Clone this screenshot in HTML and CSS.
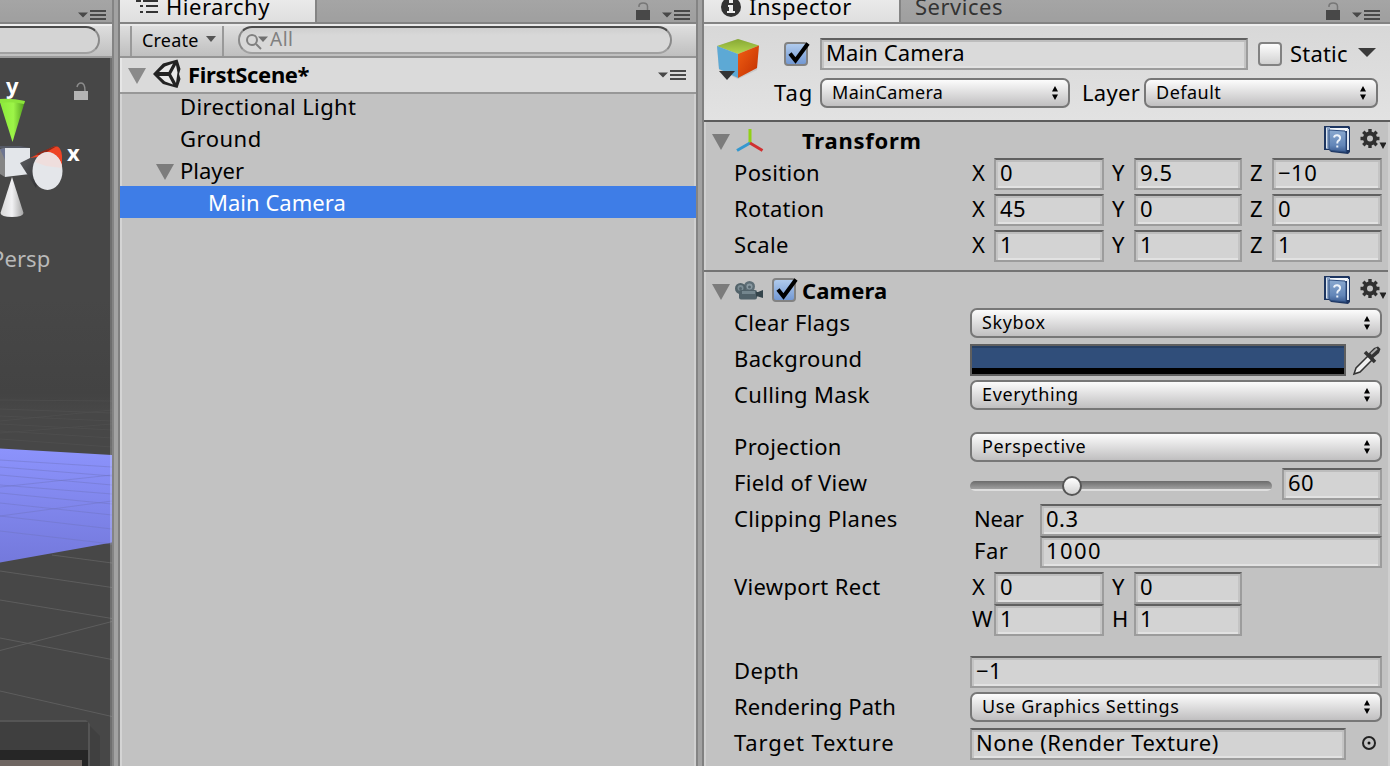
FILE: index.html
```
<!DOCTYPE html>
<html lang="en">
<head>
<meta charset="utf-8">
<title>Editor</title>
<link rel="stylesheet" href="styles.css">
</head>
<body>
<svg class="defs" width="0" height="0">
  <defs>
    <linearGradient id="gGreen" x1="0" x2="1"><stop offset="0" stop-color="#8ae83a"/><stop offset=".55" stop-color="#9df548"/><stop offset="1" stop-color="#4f9a1c"/></linearGradient>
    <linearGradient id="gWhite" x1="0" x2="1"><stop offset="0" stop-color="#d8d8d8"/><stop offset=".5" stop-color="#f2f2f4"/><stop offset="1" stop-color="#a4a4a4"/></linearGradient>
    <linearGradient id="gDark" x1="0" x2="1" y1="0" y2="1"><stop offset="0" stop-color="#5c5d61"/><stop offset=".6" stop-color="#3d3e41"/><stop offset="1" stop-color="#2e2e30"/></linearGradient>
    <linearGradient id="gPlane" x1="0" y1="0" x2="0" y2="1"><stop offset="0" stop-color="#8c93fc"/><stop offset="1" stop-color="#7479dc"/></linearGradient>
    <linearGradient id="gSky" x1="0" y1="0" x2="0" y2="1"><stop offset="0" stop-color="#474747"/><stop offset=".85" stop-color="#434343"/><stop offset="1" stop-color="#474747"/></linearGradient>
    <linearGradient id="gTop" x1="0" y1="0" x2="0" y2="1"><stop offset="0" stop-color="#87a834"/><stop offset="1" stop-color="#b5d650"/></linearGradient>
    <linearGradient id="gRed" x1="0" y1="0" x2="1" y2="1"><stop offset="0" stop-color="#f25f12"/><stop offset="1" stop-color="#c02f02"/></linearGradient>
    <linearGradient id="gCheck" x1="0" y1="0" x2="0" y2="1"><stop offset="0" stop-color="#b3cdee"/><stop offset="1" stop-color="#7096d2"/></linearGradient>
    <linearGradient id="gBox" x1="0" y1="0" x2="0" y2="1"><stop offset="0" stop-color="#fff"/><stop offset="1" stop-color="#cfcfcf"/></linearGradient>
    <linearGradient id="gBook" x1="0" y1="0" x2="0" y2="1"><stop offset="0" stop-color="#8aa9cf"/><stop offset=".7" stop-color="#6286b8"/><stop offset="1" stop-color="#3c5d92"/></linearGradient>
    <symbol id="lock" viewBox="0 0 14 18"><path d="M0 8H14V18H0Z"/><path d="M3 5V3.500Q3.500 1 7 1Q11.500 1 11.500 4.500V8" fill="none" stroke="currentColor" stroke-width="1.500"/></symbol>
    <symbol id="menu" viewBox="0 0 28 10"><path d="M0 2.500H10L5 7.500ZM12 0H28V2H12ZM12 4H28V6H12ZM12 8H28V10H12Z"/></symbol>
    <symbol id="fold" viewBox="0 0 18 16"><path d="M0 0H18L9 16Z"/></symbol>
    <symbol id="check" viewBox="0 0 26 26"><rect x="1" y="2" width="22" height="22" rx="3" fill="url(#gCheck)" stroke="#828282" stroke-width="2"/><path d="M6 12.500L11.500 19.500L24 2.500" fill="none" stroke="#000" stroke-width="4"/></symbol>
    <symbol id="help" viewBox="0 0 26 28"><path d="M0 0H25L26 1V26L24 28L7 26L5 24H0Z" fill="#1d3560"/><path d="M2 1H6V23H2Z" fill="#8ba3c6"/><path d="M2.500 2V22" stroke="#dbe5f0"/><path d="M6 2H24V5H6Z" fill="#f2f6fb"/><path d="M23 3H25V24H23Z" fill="#dfe8f3"/><path d="M5 4L21 5L22 7V26L7 24.500L5 23Z" fill="url(#gBook)" stroke="#2e4e80"/><path d="M10 11.500Q10.500 9 13.500 9.300Q16.500 10 16 12.500Q15.500 14.300 14 15Q13.300 15.500 13.300 17.500M13.300 19.500V21.500" fill="none" stroke="#eef4fb" stroke-width="2"/></symbol>
    <symbol id="gear" viewBox="0 0 26 24"><circle cx="10" cy="10.500" r="5" fill="none" stroke="#303030" stroke-width="4"/><path d="M10 1V5M10 16V20M.5 10.500H4M16 10.500H19.500M3.300 3.800L6 6.500M14 14.500L16.700 17.200M16.700 3.800L14 6.500M6 14.500L3.300 17.200" stroke="#303030" stroke-width="3.400"/><path d="M19.500 14.500H26.500L23 21Z" fill="#222"/></symbol>
    <symbol id="updown" viewBox="0 0 6 14"><path d="M3 0L6 5.500H0ZM0 8.500H6L3 14Z"/></symbol>
  </defs>
</svg>
<div class="editor">
  <section class="scene">
    <div class="tabs"><svg class="menu-icon"><use href="#menu"/></svg></div>
    <div class="scene-bar"><div class="scene-search"></div></div>
    <svg class="viewport" width="112" height="708" viewBox="0 58 112 708">
      <rect y="58" width="112" height="708" fill="#474747"/>
      <rect y="300" width="112" height="110" fill="url(#gSky)"/>
      <g stroke="#505050" fill="none" opacity=".7"><path d="M0 400L112 401M0 409L112 413M0 416L112 421M0 424L112 430M0 431L112 438M0 439L112 447M0 421L112 410M0 433L112 424"/></g>
      <path d="M0 448.500L112 455V542.500L0 562.500Z" fill="url(#gPlane)"/>
      <g stroke="#6f74bf" fill="none" opacity=".45"><path d="M0 460L112 467M0 467L112 476M0 475L112 485M0 485L112 494M0 493L112 504M0 503L112 515M0 516L112 529M0 531L112 544M0 487L112 475M0 516L112 501"/></g>
      <g stroke="#5d5d5d" fill="none"><path d="M52 555L112 563M0 571L112 587.500M0 600L112 618.500M0 638L112 659.500M0 691L112 716.500M0 650.500L112 621.500"/></g>
      <path d="M90 726L100 736V766H90Z" fill="#333" opacity=".35"/><path d="M0 720H86L90 724V766H0Z" fill="#555"/>
      <path d="M0 722H88V766H0Z" fill="#3f3f3f"/><rect y="750" width="88" height="16" fill="#262626"/><rect y="760" width="82" height="6" fill="#6f6662"/>
      <text x="6" y="94" class="axis">y</text>
      <text x="67" y="161" class="axis">x</text>
      <text x="-9" y="267" class="persp">Persp</text>
      <path d="M-1 99L25 101L12.500 142Z" fill="url(#gGreen)"/>
      <path d="M-1 99Q12 98 25 101L24 104Q12 101 0 103Z" fill="#8de53c"/>
      <path d="M0 149L5 148V177L0 174Z" fill="#858585"/><path d="M0 149L5 148V160Z" fill="#6d7590"/><path d="M0 146H20L30 148H0Z" fill="#565a66"/>
      <path d="M5 148H30V174L5 177Z" fill="#e3e6ea"/>
      <path d="M30 158L54 146.500Q61 145 62 156V166L45 168L30 160Z" fill="#ee4425"/><path d="M36 154L54 146.500L57 146L40 156Z" fill="#8f2818"/>
      <path d="M20 163L30 158L44 156L36 188Z" fill="url(#gDark)"/>
      <ellipse cx="47.500" cy="171" rx="15" ry="19" fill="#e4e6ea"/><path d="M39 156Q47 149 56 156Q62 161 62 168L46 166L35 162Z" fill="#efdedd"/>
      <path d="M12 177L23.500 213Q23 217 12 217Q1 217 .5 213Z" fill="url(#gWhite)"/>
      <g fill="#b4b4b4"><rect x="74" y="91" width="14" height="9"/><path d="M77 87Q78 83 81 83Q85 83 85 91" fill="none" stroke="#8c8c8c" stroke-width="1.500"/></g>
      <rect x="110" y="58" width="2" height="708" fill="#fff" opacity=".22"/>
    </svg>
  </section>
  <div class="splitter"></div>
  <section class="hierarchy">
    <div class="tabs">
      <div class="tab tab-hier"><svg width="24" height="16" viewBox="0 0 24 16" fill="#333"><path d="M1 0H6V2H1ZM8 0H23V2H8ZM5 5H8V7H5ZM11 5H23V7H11ZM5 11H8V13H5ZM11 11H23V13H11Z"/></svg><span class="t-hier">Hierarchy</span></div>
      <svg class="lock-icon"><use href="#lock"/></svg><svg class="menu-icon hier-menu"><use href="#menu"/></svg>
    </div>
    <div class="toolbar">
      <div class="create"><span>Create</span><svg width="10" height="6" viewBox="0 0 10 6" fill="#555"><path d="M0 0H10L5 6Z"/></svg></div>
      <div class="search"><svg width="24" height="18" viewBox="0 0 24 18" fill="none" stroke="#808080" stroke-width="2"><circle cx="6" cy="7" r="5"/><path d="M10 11L15 16"/><path d="M12 3.500H22L17 9Z" fill="#707070" stroke="none"/></svg><span>All</span></div>
    </div>
    <div class="scene-head">
      <svg class="fold" fill="#8a8a8a"><use href="#fold"/></svg>
      <svg class="unity" width="28" height="30" viewBox="0 0 28 30"><path d="M0 15L10 4.500L24.500 .5L27.500 10L26 15L27.500 20L24.500 29L10 25Z" fill="#222"/><path d="M6 13L12 7.500L20 4.500L15.500 13ZM6 17H15.500L20 25.500L12 22.500ZM23 6L24.500 13.500L23 24L18 15Z" fill="#e8e8e8"/></svg>
      <b>FirstScene*</b>
      <svg class="menu-icon head-menu"><use href="#menu"/></svg>
    </div>
    <div class="tree">
      <div class="item d1"><span>Directional Light</span></div>
      <div class="item d1 open"><span>Ground</span></div>
      <div class="item parent"><svg class="fold" fill="#7c7c7c"><use href="#fold"/></svg><span>Player</span></div>
      <div class="item d2 selected"><span>Main Camera</span></div>
    </div>
  </section>
  <div class="splitter"></div>
  <section class="inspector">
    <div class="tabs">
      <div class="tab tab-insp"><svg width="20" height="18" viewBox="0 0 20 18"><circle cx="10" cy="7" r="10" fill="#333"/><path d="M8 0H12V3H8ZM7 5H12V11H14V13H6V11H8V7H7Z" fill="#eee"/></svg><span class="t-insp">Inspector</span></div>
      <div class="tab-off">Services</div>
      <svg class="lock-icon"><use href="#lock"/></svg><svg class="menu-icon insp-menu"><use href="#menu"/></svg>
    </div>
    <div class="object">
      <svg class="cube" width="46" height="46" viewBox="0 0 46 46"><path d="M3 8L24 1L45 8L43 32L24 41L5 32Z" fill="#b5b5b5" opacity=".5"/><path d="M3 8L24 1L45 7.500L24 16Z" fill="url(#gTop)"/><path d="M3 8L24 16V40L5 31Z" fill="#5da9d5"/><path d="M45 7.500L24 16V40L43 30Z" fill="url(#gRed)"/><path d="M5 33H21L13 42Z" fill="#333"/></svg>
      <div class="object-main">
        <div class="name-row">
          <svg class="check"><use href="#check"/></svg>
          <div class="field name tight">Main Camera</div>
          <svg class="box" width="24" height="24" viewBox="0 0 24 24"><rect x="1" y="1" width="22" height="22" rx="3" fill="url(#gBox)" stroke="#828282" stroke-width="2"/></svg>
          <span class="static">Static</span>
          <svg width="18" height="9" viewBox="0 0 18 9" fill="#3b3b3b"><path d="M0 0H18L9 9Z"/></svg>
        </div>
        <div class="tag-row">
          <span class="tag">Tag</span><div class="popup p-tag"><span>MainCamera</span><svg class="ud"><use href="#updown"/></svg></div>
          <span class="layer">Layer</span><div class="popup p-layer"><span>Default</span><svg class="ud"><use href="#updown"/></svg></div>
        </div>
      </div>
    </div>
    <div class="component">
      <div class="title">
        <svg class="fold" fill="#7c7c7c"><use href="#fold"/></svg>
        <svg class="ico-tr" width="28" height="24" viewBox="0 0 28 24" fill="none" stroke-width="3"><path d="M14 1V15" stroke="#91d016"/><path d="M14 15L1 22.500" stroke="#3498cf"/><path d="M14 15L26.500 22.500" stroke="#d13030"/></svg>
        <b class="wide">Transform</b><svg class="help"><use href="#help"/></svg><svg class="gear"><use href="#gear"/></svg>
      </div>
      <div class="rows">
        <div class="row"><label>Position</label><div class="vec"><i>X</i><div class="field">0</div><i>Y</i><div class="field">9.5</div><i>Z</i><div class="field">−10</div></div></div>
        <div class="row"><label>Rotation</label><div class="vec"><i>X</i><div class="field">45</div><i>Y</i><div class="field">0</div><i>Z</i><div class="field">0</div></div></div>
        <div class="row"><label>Scale</label><div class="vec"><i>X</i><div class="field">1</div><i>Y</i><div class="field">1</div><i>Z</i><div class="field">1</div></div></div>
      </div>
    </div>
    <div class="component last">
      <div class="title">
        <svg class="fold" fill="#7c7c7c"><use href="#fold"/></svg>
        <svg class="ico-cam" width="28" height="20" viewBox="0 0 28 20"><circle cx="14.500" cy="5.500" r="5.500" fill="#5e6e76"/><circle cx="5.500" cy="7.500" r="5.500" fill="#53636a"/><circle cx="14.500" cy="5.500" r="3" fill="#8a9aa2"/><circle cx="5.500" cy="7" r="3" fill="#7c8d95"/><circle cx="14.500" cy="6" r="1.500" fill="#56666e"/><circle cx="5.500" cy="7.500" r="1.500" fill="#56666e"/><rect x="4" y="9" width="18" height="9.500" rx="2" fill="#51626a"/><rect x="7" y="10" width="13" height="3" fill="#74868e"/><path d="M21 11H23L28 9V17L23 15.500H21Z" fill="#34444b"/></svg>
        <svg class="check cam-check"><use href="#check"/></svg>
        <b class="narrow">Camera</b><svg class="help"><use href="#help"/></svg><svg class="gear"><use href="#gear"/></svg>
      </div>
      <div class="rows">
        <div class="row"><label>Clear Flags</label><div class="popup"><span>Skybox</span><svg class="ud"><use href="#updown"/></svg></div></div>
        <div class="row"><label>Background</label><div class="color"></div><svg class="dropper" width="30" height="32" viewBox="0 0 30 32"><path d="M2 30L4 24L17 11L21 15L8 28Z" fill="#eee" stroke="#333" stroke-width="1.500"/><path d="M13 8L23 18" stroke="#333" stroke-width="3.500"/><path d="M16 10L22 4L26 2.500L28.500 5L27 9L20 15Z" fill="#333"/><path d="M19 10L25 4.500" stroke="#aaa" stroke-width="2"/></svg></div>
        <div class="row"><label>Culling Mask</label><div class="popup"><span>Everything</span><svg class="ud"><use href="#updown"/></svg></div></div>
        <div class="row gap-16"><label>Projection</label><div class="popup"><span>Perspective</span><svg class="ud"><use href="#updown"/></svg></div></div>
        <div class="row"><label>Field of View</label><div class="slider"><div class="knob"></div></div><div class="field fov">60</div></div>
        <div class="row tall"><label>Clipping Planes</label><div class="planes"><i class="tight">Near</i><div class="field">0.3</div><i>Far</i><div class="field loose">1000</div></div></div>
        <div class="row tall"><label>Viewport Rect</label><div class="vec two"><i>X</i><div class="field">0</div><i>Y</i><div class="field">0</div><i>W</i><div class="field">1</div><i>H</i><div class="field">1</div></div></div>
        <div class="row gap-16"><label>Depth</label><div class="field full">−1</div></div>
        <div class="row"><label class="tight">Rendering Path</label><div class="popup"><span>Use Graphics Settings</span><svg class="ud"><use href="#updown"/></svg></div></div>
        <div class="row"><label class="airy">Target Texture</label><div class="field texture">None (Render Texture)</div><svg class="picker" width="16" height="16" viewBox="0 0 16 16"><circle cx="8" cy="8" r="6" fill="none" stroke="#222" stroke-width="2"/><circle cx="8" cy="8" r="1.500" fill="#111"/></svg></div>
      </div>
    </div>
  </section>
</div>
</body>
</html>
```
FILE: styles.css
```
* { box-sizing: border-box; }
body { margin: 0; background: #c2c2c2; color: #000; font: 22px/30px "Noto Sans", sans-serif; letter-spacing: .5px; overflow: hidden; }
svg { display: block; flex: none; }
i { font-style: normal; }
b { font-weight: 700; letter-spacing: .3px; }
.defs { position: absolute; }
.editor { display: flex; width: 1390px; height: 766px; overflow: hidden; white-space: nowrap; }
.tabs { display: flex; height: 24px; background: linear-gradient(#a5a5a5, #9f9f9f); border-bottom: 2px solid #838383; overflow: hidden; }
.menu-icon { width: 28px; height: 10px; fill: #484848; }
.lock-icon { width: 14px; height: 18px; margin: 2px 0 0 auto; fill: #484848; color: #777; }
.splitter { width: 8px; flex: none; background: #a2a2a2; border-left: 2px solid #848484; border-right: 2px solid #808080; }

.scene { width: 112px; flex: none; overflow: hidden; }
.scene .menu-icon { margin: 10px 0 0 78px; }
.scene-bar { height: 34px; background: linear-gradient(#dedede, #c0c0c0); border-top: 2px solid #eee; border-bottom: 2px solid #9a9a9a; }
.scene-search { width: 120px; height: 28px; margin-left: -20px; border: 2px solid #8a8a8a; border-top-color: #4b4b4b; border-bottom-color: #a0a0a0; border-radius: 14px; background: #d4d4d4; }
.axis { font: 700 22px "Noto Sans", sans-serif; fill: #fff; }
.persp { fill: #b9b9b9; letter-spacing: .1px; }

.hierarchy { width: 576px; flex: none; border-right: 2px solid #d0d0d0; box-shadow: inset 2px 0 #d4d4d4; }
.hierarchy .tabs, .hierarchy .toolbar, .hierarchy .scene-head, .hierarchy .selected { margin-right: -2px; }
.tab { display: flex; height: 22px; background: linear-gradient(#eaeaea, #dfdfdf); border-right: 2px solid #848484; }
.tab span { margin-top: -9px; }
.tab-hier { width: 197px; padding-left: 15px; }
.t-hier { margin-left: 7px; }
.hier-menu { margin: 10px 6px 0 12px; }
.toolbar { display: flex; height: 34px; background: linear-gradient(#dedede, #bfbfbf); border-top: 2px solid #e9e9e9; border-bottom: 2px solid #949494; }
.create { display: flex; width: 94px; margin-left: 10px; padding: 0 6px 0 10px; border-left: 2px solid #999; border-right: 2px solid #999; font-size: 18px; line-height: 29px; letter-spacing: .2px; }
.create svg { margin: 10px 0 0 auto; }
.search { display: flex; width: 434px; height: 28px; margin-left: 14px; padding: 5px 0 0 6px; border: 2px solid #8a8a8a; border-top-color: #4b4b4b; border-bottom-color: #a0a0a0; border-radius: 14px; background: linear-gradient(#cfcfcf, #d8d8d8 30%); color: #808080; font-size: 19px; line-height: 26px; }
.search span { margin-top: -7px; }
.scene-head { display: flex; height: 36px; padding: 2px 8px 0 8px; background: #dadada; border-bottom: 2px solid #979797; box-shadow: inset 2px 0 #e6e6e6; }
.fold { width: 18px; height: 16px; }
.scene-head .fold { margin-top: 8px; }
.unity { margin: -1px 0 0 7px; }
.scene-head b { margin-left: 7px; line-height: 28px; letter-spacing: -.35px; }
.head-menu { margin: 10px 2px 0 auto; }
.tree { margin-top: -4px; letter-spacing: .38px; }
.item { display: flex; height: 32px; line-height: 32px; }
.item.d1 { padding-left: 60px; }
.item.open { letter-spacing: .5px; }
.item.d2 { padding-left: 88px; letter-spacing: .03px; }
.parent { padding-left: 36px; letter-spacing: 0; }
.parent .fold { margin: 10px 6px 0 0; }
.selected { background: #3e7de7; color: #fff; }

.inspector { width: 686px; flex: none; border-right: 2px solid #cfcfcf; box-shadow: inset 2px 0 #d0d0d0; }
.inspector .tabs, .object { margin-right: -2px; }
.tab-insp { width: 197px; padding-left: 17px; }
.t-insp { margin-left: 8px; }
.tab-off { margin: -9px 0 0 14px; color: #333; }
.insp-menu { margin: 10px 10px 0 12px; }
.object { display: flex; height: 98px; padding: 12px 0 0 10px; background: linear-gradient(#d8d8d8, #e2e2e2); border-top: 2px solid #eee; border-bottom: 2px solid #5c5c5c; }
.object-main { width: 618px; margin-left: 14px; }
.name-row, .tag-row { display: flex; height: 32px; }
.name-row { align-items: center; }
.check { width: 26px; height: 26px; }
.name-row .check { margin: 0 0 0 10px; }
.field { height: 32px; padding: 0 0 0 4px; line-height: 25px; background: #d3d3d3; border: 2px solid #9c9c9c; border-top-color: #606060; box-shadow: inset 0 2px #bdbdbd, inset 2px 0 #c4c4c4, inset -2px 0 #c4c4c4, inset 0 -2px #e2e2e2; }
.field.name { width: 428px; margin-left: 10px; background: #dadada; }
.tight { letter-spacing: .1px; }
.loose { letter-spacing: 1.4px; }
.airy { letter-spacing: .88px; }
.box { margin-left: 10px; }
.static { margin: -2px 0 0 8px; width: 67px; letter-spacing: .2px; }
.name-row > svg:last-child { margin-top: -3px; margin-left: 1px; }
.tag-row { margin-top: 8px; line-height: 29px; }
.tag { width: 46px; letter-spacing: 1px; }
.popup { display: flex; width: 412px; height: 30px; padding: 0 10px; border: 2px solid #777; border-radius: 7px; background: linear-gradient(#fcfcfc, #c0bfc0); font-size: 18px; line-height: 25px; letter-spacing: .63px; }
.ud { width: 6px; height: 14px; margin: 6px 0 0 auto; }
.p-tag { width: 250px; letter-spacing: .35px; }
.layer { margin-left: 12px; width: 62px; letter-spacing: .3px; }
.p-layer { width: 234px; letter-spacing: .5px; }

.component { height: 150px; border-bottom: 2px solid #747474; }
.component.last { height: 494px; border: 0; }
.title { display: flex; height: 36px; padding-left: 8px; line-height: 36px; }
.title .fold { margin-top: 12px; }
.wide { letter-spacing: .75px; }
.narrow { letter-spacing: .15px; }
.ico-tr { margin: 6px 38px 0 6px; }
.ico-cam { margin: 9px 9px 0 5px; }
.cam-check { margin: 5px 4px 0 0; }
.help { width: 26px; height: 28px; margin: 4px 10px 0 auto; }
.gear { width: 26px; height: 24px; margin: 6px 2px 0 0; overflow: visible; }
.rows { display: flex; flex-direction: column; gap: 4px; padding-left: 30px; line-height: 28px; }
.row { display: flex; height: 32px; }
.row.tall { height: 64px; }
.row.gap-16 { margin-top: 16px; }
label { width: 236px; flex: none; }
label:not(.tight, .airy) { letter-spacing: .33px; }
.vec { display: grid; grid-template-columns: 24px 110px 30px 108px 30px 110px; }
.vec.two { grid-template-columns: 24px 110px 30px 108px; }
.vec i { padding-left: 8px; }
.vec i:nth-child(1), .vec.two i:nth-child(5) { padding-left: 2px; }
.planes { display: grid; grid-template-columns: 70px 342px; }
.planes i { padding-left: 4px; }
.planes .tight { letter-spacing: -.2px; }
.field.full { width: 412px; }
.field.texture { width: 376px; }
.picker { margin: 7px 0 0 15px; }
.color { width: 376px; height: 32px; border: 2px solid #5f5f5f; background: linear-gradient(#263f63 0 2px, #304e7a 2px 22px, #000 22px); }
.dropper { margin-left: 6px; }
.slider { width: 302px; height: 10px; margin: 13px 10px 0 0; border-radius: 5px; background: linear-gradient(#6c6c6c, #9c9c9c 75%, #dedede 80%); }
.knob { width: 20px; height: 20px; margin: -5px 0 0 92px; border: 2px solid #555; border-radius: 50%; background: linear-gradient(#fff, #d2d2d2); }
.field.fov { width: 100px; }
```
